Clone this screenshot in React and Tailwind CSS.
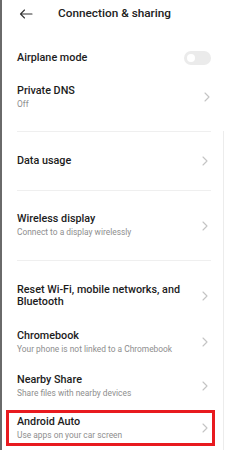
import React from "react";

function Chevron() {
  return (
    <svg width="6" height="10" viewBox="0 0 6 10" className="shrink-0">
      <path d="M1 1l4 4-4 4" fill="none" stroke="#c4c4c4" strokeWidth="1.1" strokeLinecap="round" strokeLinejoin="round" />
    </svg>
  );
}

function Item({ title, sub, className = "" }) {
  return (
    <div className={`flex items-center justify-between pr-[15px] ${className}`}>
      <div className="flex flex-col">
        <div className="text-[10.8px] leading-[12px] font-medium text-[#1c1c1c]">{title}</div>
        {sub && <div className="text-[8.4px] leading-[12px] text-[#8e8e8e] mt-px">{sub}</div>}
      </div>
      <Chevron />
    </div>
  );
}

export default function App() {
  return (
    <div className="w-[225px] h-[450px] overflow-hidden bg-white border-l-2 border-[#6a6a6a] flex flex-col" style={{ fontFamily: "Roboto, 'Noto Sans', sans-serif" }}>
      {/* header */}
      <div className="h-[28px] flex items-center">
        <svg width="14" height="10" viewBox="0 0 14 10" className="ml-[17px]">
          <path d="M13 5H1.5M5.5 1L1.5 5l4 4" fill="none" stroke="#333" strokeWidth="1.1" strokeLinecap="round" strokeLinejoin="round" />
        </svg>
        <div className="ml-[25px] text-[11.8px] font-medium text-[#222]">Connection &amp; sharing</div>
      </div>

      <div className="mt-[13px] h-[34px] pl-[15px] pr-[14px] flex items-center justify-between">
        <span className="text-[10.8px] font-medium text-[#1c1c1c]">Airplane mode</span>
        <div className="w-[27px] h-[14px] rounded-full bg-[#ebebeb] flex items-center pl-[3px]">
          <div className="w-[8px] h-[8px] rounded-full bg-white" />
        </div>
      </div>

      <Item title="Private DNS" sub="Off" className="h-[44px] pl-[15px]" />

      <div className="mt-[12px] flex-1 flex flex-col border-r border-[#ececec] mr-[1px]">
        <div className="h-px bg-[#efefef] ml-[15px] mr-[12px]" />
        <Item title="Data usage" className="h-[58px] pl-[15px]" />
        <div className="h-px bg-[#efefef] ml-[15px] mr-[12px]" />
        <Item title="Wireless display" sub="Connect to a display wirelessly" className="h-[69px] pl-[15px]" />
        <div className="h-px bg-[#efefef] ml-[15px] mr-[12px]" />
        <Item
          title={<span className="block w-[175px]">Reset Wi-Fi, mobile networks, and Bluetooth</span>}
          className="mt-[11px] h-[48px] pl-[15px]"
        />
        <Item title="Chromebook" sub="Your phone is not linked to a Chromebook" className="h-[44px] pl-[15px]" />
        <Item title="Nearby Share" sub="Share files with nearby devices" className="h-[44px] pl-[15px]" />
        <div className="ml-[4px] mt-[2px] w-[209px] h-[36px] border-[3px] border-[#e81a1f] flex items-center justify-between pl-[8px] pr-[4px]">
          <div className="flex flex-col">
            <div className="text-[10.8px] leading-[12px] font-medium text-[#1c1c1c]">Android Auto</div>
            <div className="text-[8.4px] leading-[12px] text-[#8e8e8e] mt-px">Use apps on your car screen</div>
          </div>
          <Chevron />
        </div>
      </div>
    </div>
  );
}
